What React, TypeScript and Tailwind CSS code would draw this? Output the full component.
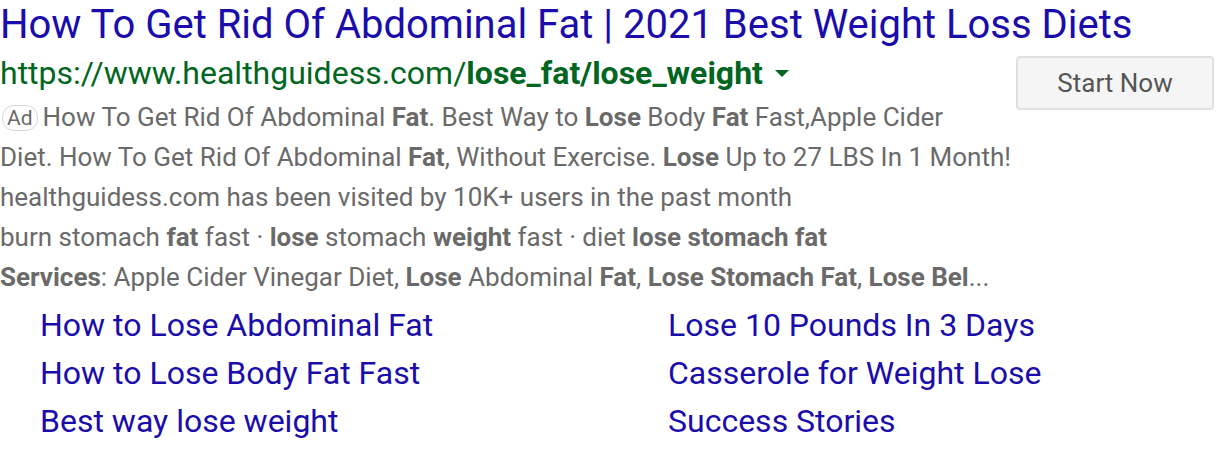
const sitelinksLeft = ['How to Lose Abdominal Fat', 'How to Lose Body Fat Fast', 'Best way lose weight']
const sitelinksRight = ['Lose 10 Pounds In 3 Days', 'Casserole for Weight Lose', 'Success Stories']

export default function App() {
  return (
    <div className="w-[1216px] h-[450px] bg-white overflow-hidden font-['Roboto','Liberation_Sans',sans-serif]">
      {/* Headline */}
      <h1 className="pt-[1px] text-[40px] leading-[48px] text-[#1a0dab] whitespace-nowrap">
        How To Get Rid Of Abdominal Fat | 2021 Best Weight Loss Diets
      </h1>

      <div className="flex">
        <div className="flex-1">
          {/* Display URL */}
          <div className="flex items-center text-[32px] leading-[48px] text-[#006621] whitespace-nowrap">
            <span>https://www.healthguidess.com/</span>
            <b className="font-bold">lose_fat/lose_weight</b>
            <span className="ml-3 w-0 h-0 border-l-[7px] border-r-[7px] border-t-[7px] border-l-transparent border-r-transparent border-t-[#006621]" />
          </div>

          {/* Description */}
          <div className="text-[26px] leading-[40px] text-[#6a6a6a]">
            <p className="whitespace-nowrap">
              <span className="inline-block align-[1px] ml-[2px] mr-[5px] px-[4px] text-[21px] leading-[24px] border border-[#d6d6d6] rounded-[12px]">Ad</span>
              How To Get Rid Of Abdominal <b className="font-bold">Fat</b>. Best Way to <b className="font-bold">Lose</b> Body <b className="font-bold">Fat</b> Fast,Apple Cider
            </p>
            <p className="whitespace-nowrap">
              Diet. How To Get Rid Of Abdominal <b className="font-bold">Fat</b>, Without Exercise. <b className="font-bold">Lose</b> Up to 27 LBS In 1 Month!
            </p>
            <p className="whitespace-nowrap">healthguidess.com has been visited by 10K+ users in the past month</p>
            <p className="whitespace-nowrap">
              burn stomach <b className="font-bold">fat</b> fast · <b className="font-bold">lose</b> stomach <b className="font-bold">weight</b> fast · diet <b className="font-bold">lose stomach fat</b>
            </p>
            <p className="whitespace-nowrap">
              <b className="font-bold">Services</b>: Apple Cider Vinegar Diet, <b className="font-bold">Lose</b> Abdominal <b className="font-bold">Fat</b>, <b className="font-bold">Lose Stomach Fat</b>, <b className="font-bold">Lose Bel</b>...
            </p>
          </div>
        </div>

        <div className="pt-[7px] pr-[2px]">
          <button className="w-[198px] h-[54px] bg-[#f5f5f5] border-2 border-[#e0e0e0] rounded-[4px] text-[26px] text-[#555555]">
            Start Now
          </button>
        </div>
      </div>

      {/* Sitelinks */}
      <div className="grid grid-cols-[628px_1fr] pt-[4px] pl-[40px] text-[32px] leading-[48px] text-[#1a0dab]">
        <div>
          {sitelinksLeft.map(s => (
            <div key={s}>{s}</div>
          ))}
        </div>
        <div>
          {sitelinksRight.map(s => (
            <div key={s}>{s}</div>
          ))}
        </div>
      </div>
    </div>
  )
}
